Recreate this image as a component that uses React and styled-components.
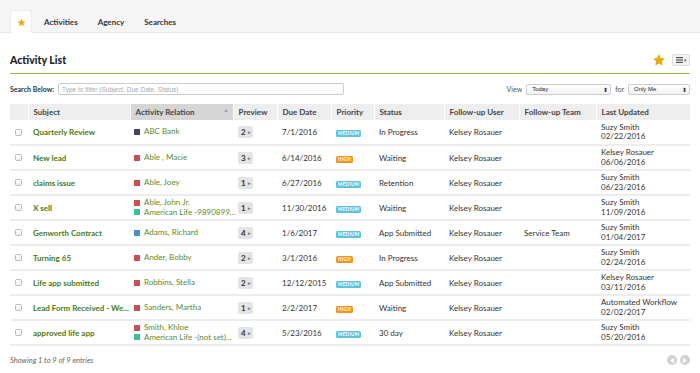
import styled, { createGlobalStyle } from 'styled-components';

const GlobalStyle = createGlobalStyle`
    body{
        margin : 0;
        background : #fff;
        font-family : Lato, "Open Sans", sans-serif;
        color : #333;
    }
`;

const rows = [
    { subject: 'Quarterly Review', rel: [['#4b3f72', 'ABC Bank']], preview: 2, due: '7/1/2016', pri: 'MEDIUM', status: 'In Progress', user: 'Kelsey Rosauer', team: '', by: 'Suzy Smith', on: '02/22/2016' },
    { subject: 'New lead', rel: [['#c9504f', 'Able , Macie']], preview: 3, due: '6/14/2016', pri: 'HIGH', status: 'Waiting', user: 'Kelsey Rosauer', team: '', by: 'Kelsey Rosauer', on: '06/06/2016' },
    { subject: 'claims issue', rel: [['#c9504f', 'Able, Joey']], preview: 1, due: '6/27/2016', pri: 'MEDIUM', status: 'Retention', user: 'Kelsey Rosauer', team: '', by: 'Suzy Smith', on: '06/23/2016' },
    { subject: 'X sell', rel: [['#c9504f', 'Able, John Jr.'], ['#3dbf97', 'American Life -9890899...']], preview: 1, due: '11/30/2016', pri: 'MEDIUM', status: 'Waiting', user: 'Kelsey Rosauer', team: '', by: 'Suzy Smith', on: '11/09/2016' },
    { subject: 'Genworth Contract', rel: [['#4a8fc4', 'Adams, Richard']], preview: 4, due: '1/6/2017', pri: 'MEDIUM', status: 'App Submitted', user: 'Kelsey Rosauer', team: 'Service Team', by: 'Suzy Smith', on: '01/04/2017' },
    { subject: 'Turning 65', rel: [['#c9504f', 'Ander, Bobby']], preview: 2, due: '3/1/2016', pri: 'HIGH', status: 'In Progress', user: 'Kelsey Rosauer', team: '', by: 'Suzy Smith', on: '02/24/2016' },
    { subject: 'Life app submitted', rel: [['#c9504f', 'Robbins, Stella']], preview: 2, due: '12/12/2015', pri: 'MEDIUM', status: 'App Submitted', user: 'Kelsey Rosauer', team: '', by: 'Kelsey Rosauer', on: '03/11/2016' },
    { subject: 'Lead Form Received - We...', rel: [['#c9504f', 'Sanders, Martha']], preview: 1, due: '2/2/2017', pri: 'HIGH', status: 'Waiting', user: 'Kelsey Rosauer', team: '', by: 'Automated Workflow', on: '02/02/2017' },
    { subject: 'approved life app', rel: [['#c9504f', 'Smith, Khloe'], ['#3dbf97', 'American Life -(not set)...']], preview: 4, due: '5/23/2016', pri: 'MEDIUM', status: '30 day', user: 'Kelsey Rosauer', team: '', by: 'Suzy Smith', on: '05/20/2016' },
];

const columns = [
    ['', 18], ['Subject', 102], ['Activity Relation', 103], ['Preview', 44], ['Due Date', 54],
    ['Priority', 43], ['Status', 70], ['Follow-up User', 75], ['Follow-up Team', 77], ['Last Updated', 94],
];

function Star({ size }) {
    return (
        <svg width={size} height={size} viewBox="0 0 24 24">
            <path d="M12 1.8l3.1 6.6 7.2.9-5.3 5 1.4 7.1L12 17.9l-6.4 3.5 1.4-7.1-5.3-5 7.2-.9z" fill="#e8ac0c" />
        </svg>
    );
}

export default function App() {
    return (
        <Page>
            <GlobalStyle />
            <TabBar>
                <Tab className='on'><Star size={9} /></Tab>
                <Tab>Activities</Tab>
                <Tab>Agency</Tab>
                <Tab>Searches</Tab>
            </TabBar>
            <Content>
                <TitleRow>
                    <Title>Activity List</Title>
                    <Star size={14} />
                    <MenuBtn>
                        <svg width="7" height="6" viewBox="0 0 7 6">
                            <rect y="0" width="7" height="1.2" fill="#555" />
                            <rect y="2.4" width="7" height="1.2" fill="#555" />
                            <rect y="4.8" width="7" height="1.2" fill="#555" />
                        </svg>
                        <Caret>▾</Caret>
                    </MenuBtn>
                </TitleRow>
                <FilterRow>
                    <Label>Search Below:</Label>
                    <SearchInput placeholder='Type to filter (Subject, Due Date, Status)' />
                    <Spacer />
                    <Plain>View</Plain>
                    <Select $w={85}><span>Today</span><Arrows>⬍</Arrows></Select>
                    <Plain>for</Plain>
                    <Select $w={62}><span>Only Me</span><Arrows>⬍</Arrows></Select>
                </FilterRow>
                <Table>
                    <colgroup>
                        {columns.map(([n, w], i) => <col key={i} style={{ width: w }} />)}
                    </colgroup>
                    <thead>
                        <tr>
                            {columns.map(([n], i) => (
                                <Th key={i} $sorted={n === 'Activity Relation'}>
                                    {n}
                                    {n === 'Activity Relation' && <SortArrow>▲</SortArrow>}
                                </Th>
                            ))}
                        </tr>
                    </thead>
                    <tbody>
                        {rows.map((r, i) => (
                            <tr key={i}>
                                <Td><Check /></Td>
                                <Td><Subject>{r.subject}</Subject></Td>
                                <RelCell>
                                    {r.rel.map(([c, t], j) => (
                                        <Rel key={j}><Square $c={c} />{t}</Rel>
                                    ))}
                                </RelCell>
                                <Td><Count>{r.preview}<small>▸</small></Count></Td>
                                <Td>{r.due}</Td>
                                <Td><Priority $high={r.pri === 'HIGH'}>{r.pri}</Priority></Td>
                                <Td>{r.status}</Td>
                                <Td>{r.user}</Td>
                                <Td>{r.team}</Td>
                                <Td><Updated>{r.by}<br />{r.on}</Updated></Td>
                            </tr>
                        ))}
                    </tbody>
                </Table>
                <Footer>
                    <Info>Showing 1 to 9 of 9 entries</Info>
                    <Pager>
                        <PageBtn><svg width="4" height="5" viewBox="0 0 4 5"><path d="M4 0L0 2.5 4 5z" fill="#fff" /></svg></PageBtn>
                        <PageBtn><svg width="4" height="5" viewBox="0 0 4 5"><path d="M0 0l4 2.5L0 5z" fill="#fff" /></svg></PageBtn>
                    </Pager>
                </Footer>
            </Content>
        </Page>
    );
}

const Page = styled.div`
    width : 700px;
    height : 373px;
    overflow : hidden;
`;

const TabBar = styled.div`
    height : 33px;
    background : #f6f6f6;
    border-bottom : 1px solid #e6e6e6;
    box-sizing : border-box;
    padding : 10px 0 0 10px;
    display : flex;
    align-items : stretch;
`;

const Tab = styled.div`
    font-size : 8px;
    font-weight : 700;
    color : #333;
    padding : 0 10px;
    display : flex;
    align-items : center;
    margin-bottom : -1px;
    &.on{
        width : 22px;
        box-sizing : border-box;
        padding : 0;
        justify-content : center;
        background : #fff;
        border : 1px solid #ececec;
        border-bottom : none;
        border-radius : 3px 3px 0 0;
        margin-right : 2px;
    }
`;

const Content = styled.div`
    padding : 0 10px;
`;

const TitleRow = styled.div`
    height : 41px;
    box-sizing : border-box;
    padding-top : 14px;
    border-bottom : 1px solid #8cc63f;
    display : flex;
    align-items : center;
    gap : 4px;
`;

const Title = styled.div`
    flex : 1;
    font-size : 10.5px;
    font-weight : 900;
    color : #222;
`;

const MenuBtn = styled.div`
    width : 18px;
    height : 12px;
    box-sizing : border-box;
    border : 1px solid #ddd;
    border-radius : 2px;
    background : #f4f4f4;
    display : flex;
    align-items : center;
    justify-content : center;
    gap : 1px;
    margin-left : 2px;
`;

const Caret = styled.span`
    font-size : 5px;
    color : #555;
`;

const FilterRow = styled.div`
    height : 30px;
    display : flex;
    align-items : center;
    gap : 3px;
`;

const Label = styled.span`
    font-size : 7px;
    font-weight : 700;
    color : #333;
    margin-right : 1px;
`;

const SearchInput = styled.input`
    width : 286px;
    height : 12px;
    box-sizing : border-box;
    border : 1px solid #ccc;
    border-radius : 2px;
    font-family : "Liberation Sans", sans-serif;
    font-size : 6.5px;
    padding : 0 3px;
    outline : none;
    &::placeholder{
        color : #aaa;
    }
`;

const Spacer = styled.div`
    flex : 1;
`;

const Plain = styled.span`
    font-size : 7px;
    color : #555;
    margin : 0 1px;
`;

const Select = styled.div`
    width : ${p => p.$w}px;
    height : 11px;
    box-sizing : border-box;
    border : 1px solid #ccc;
    border-radius : 2px;
    background : linear-gradient(#fff, #f1f1f1);
    font-family : "Liberation Sans", sans-serif;
    font-size : 6px;
    color : #222;
    display : flex;
    align-items : center;
    justify-content : space-between;
    padding : 0 2px 0 5px;
`;

const Arrows = styled.span`
    font-size : 6px;
    color : #333;
`;

const Table = styled.table`
    width : 680px;
    table-layout : fixed;
    border-collapse : collapse;
    font-size : 8px;
`;

const Th = styled.th`
    position : relative;
    height : 16px;
    padding : 0 0 0 5px;
    text-align : left;
    font-weight : 700;
    color : #444;
    background : ${p => p.$sorted ? '#d6d6d6' : '#eeeeee'};
    border-left : 1px solid #fff;
    white-space : nowrap;
    &:first-child{
        border-left : none;
    }
`;

const SortArrow = styled.span`
    position : absolute;
    right : 4px;
    top : 3px;
    font-size : 5px;
    color : #999;
`;

const Td = styled.td`
    height : 25px;
    box-sizing : border-box;
    padding : 0 0 0 5px;
    border-bottom : 2px solid #ededed;
    color : #333;
    white-space : nowrap;
    overflow : hidden;
`;

const RelCell = styled(Td)`
    padding-left : 4px;
    overflow : visible;
`;

const Check = styled.div`
    width : 7px;
    height : 7px;
    box-sizing : border-box;
    border : 1px solid #bbb;
    border-radius : 1.5px;
    background : linear-gradient(#fff, #eee);
`;

const Subject = styled.span`
    font-weight : 700;
    color : #4a7b10;
`;

const Rel = styled.div`
    color : #5c8b2c;
    line-height : 9.5px;
    display : flex;
    align-items : center;
`;

const Square = styled.span`
    width : 6px;
    height : 6px;
    background : ${p => p.$c};
    margin-right : 4px;
    flex : none;
`;

const Count = styled.span`
    display : inline-flex;
    align-items : center;
    gap : 2px;
    background : #e4e4e4;
    border-radius : 2px;
    padding : 1px 2px 1px 3px;
    font-weight : 700;
    color : #333;
    small{
        font-size : 5px;
        color : #777;
    }
`;

const Priority = styled.span`
    display : inline-block;
    font-size : 4.6px;
    font-weight : 700;
    letter-spacing : 0.3px;
    color : #fff;
    background : ${p => p.$high ? '#f7921e' : '#5bc4e0'};
    border-radius : 1.5px;
    padding : 1px 2px;
    line-height : 5px;
`;

const Updated = styled.div`
    line-height : 9.5px;
`;

const Footer = styled.div`
    height : 28px;
    display : flex;
    align-items : center;
    justify-content : space-between;
`;

const Info = styled.span`
    font-size : 7.5px;
    font-style : italic;
    color : #666;
`;

const Pager = styled.div`
    display : flex;
    gap : 3px;
`;

const PageBtn = styled.div`
    width : 10px;
    height : 10px;
    border-radius : 50%;
    background : #d2d2d2;
    display : flex;
    align-items : center;
    justify-content : center;
`;
